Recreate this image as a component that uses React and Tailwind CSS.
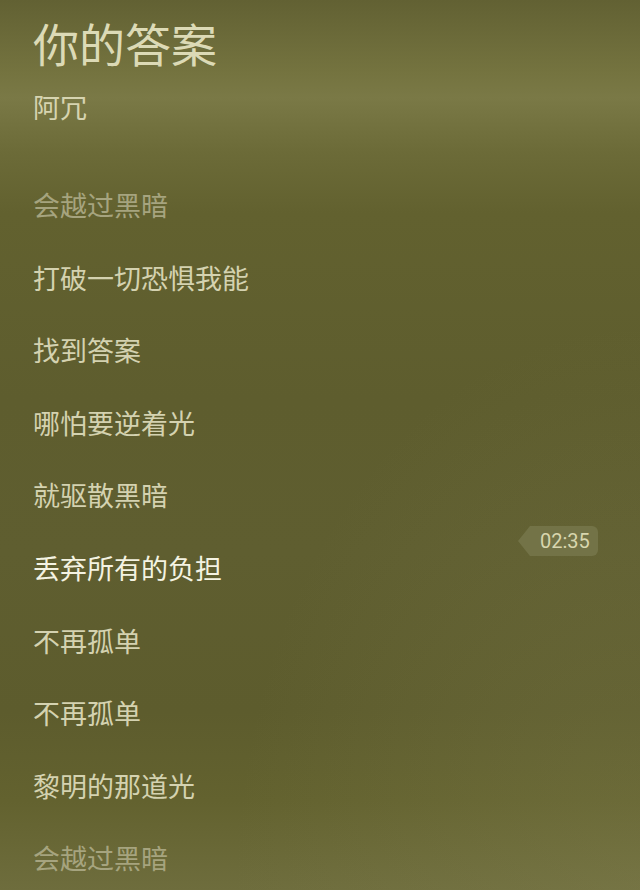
import React from 'react';

const lyrics = [
    { text: '会越过黑暗', tone: 'dim' },
    { text: '打破一切恐惧我能', tone: 'normal' },
    { text: '找到答案', tone: 'normal' },
    { text: '哪怕要逆着光', tone: 'normal' },
    { text: '就驱散黑暗', tone: 'normal' },
    { text: '丢弃所有的负担', tone: 'active' },
    { text: '不再孤单', tone: 'normal' },
    { text: '不再孤单', tone: 'normal' },
    { text: '黎明的那道光', tone: 'normal' },
    { text: '会越过黑暗', tone: 'dim' },
];

const toneClass = {
    dim: 'text-[#a6a47f]',
    normal: 'text-[#d4d2b0]',
    active: 'text-[#f4f3e2]',
};

export default function App() {
    return (
        <div
            className="relative w-[640px] h-[890px] overflow-hidden bg-[linear-gradient(180deg,#626133_0%,#74733f_8%,#7a7946_11%,#6c6b38_17%,#62612f_24%,#5e5d2e_45%,#5f5e30_62%,#5d5c2d_80%,#63622f_90%,#6e6d3d_100%)]"
            style={{ fontFamily: '"Noto Sans CJK SC", "Noto Sans", sans-serif' }}
        >
            {/* soft light patch, bottom right */}
            <div className="absolute inset-0 bg-[radial-gradient(ellipse_at_100%_100%,rgba(140,138,90,0.25),transparent_45%)]" />

            <div className="relative pl-[33px]">
                {/* song header */}
                <div className="pt-[17px]">
                    <h1 className="text-[46px] leading-[50px] text-[#dcdab6]">你的答案</h1>
                    <div className="mt-[20px] text-[27px] leading-[40px] text-[#d6d4b0]">阿冗</div>
                </div>

                {/* lyric lines */}
                <div className="mt-[42px]">
                    {lyrics.map((line, i) => (
                        <div
                            key={i}
                            className={`h-[72.6px] flex items-center text-[27px] ${toneClass[line.tone]}`}
                        >
                            {line.text}
                        </div>
                    ))}
                </div>
            </div>

            {/* time tag */}
            <div className="absolute left-[518px] top-[526px] flex items-center">
                <div className="w-0 h-0 border-y-[15px] border-y-transparent border-r-[12px] border-r-[#737347]" />
                <div className="h-[30px] pl-[10px] pr-[8px] flex items-center rounded-r-[6px] bg-[#737347] text-[20px] text-[#d8d6ae]" style={{ fontFamily: 'Roboto, "Noto Sans", sans-serif' }}>
                    02:35
                </div>
            </div>
        </div>
    );
}
